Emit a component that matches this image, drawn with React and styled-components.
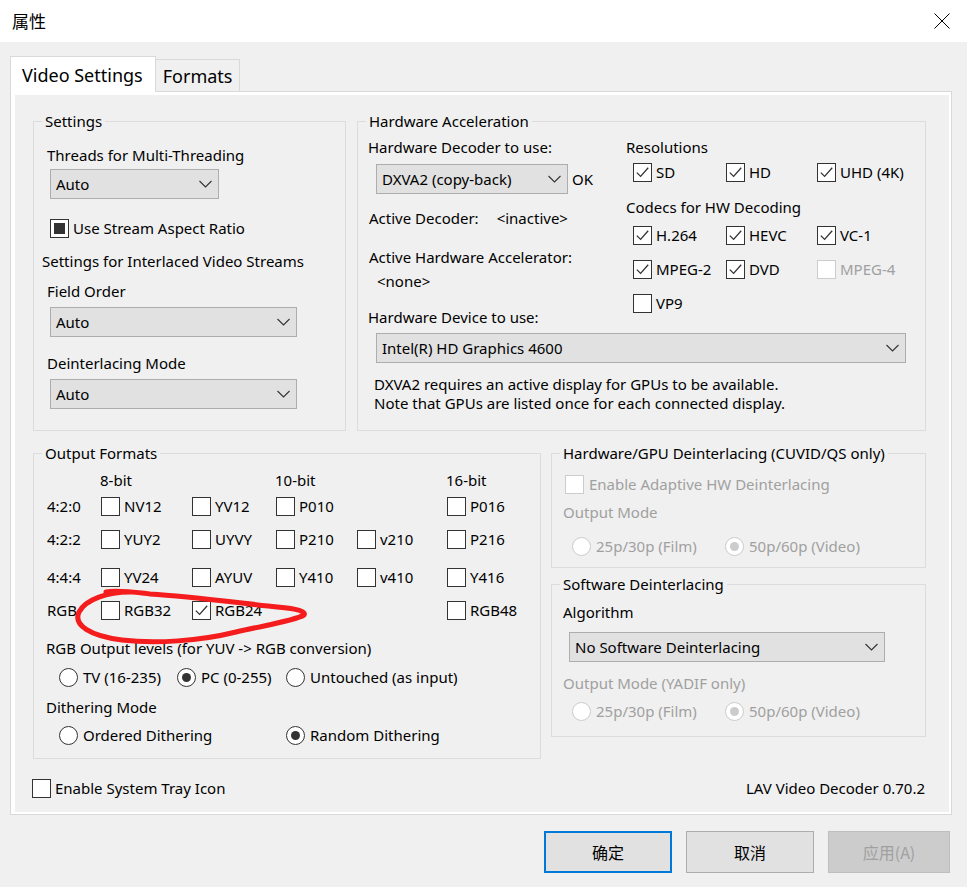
import React from 'react'
import styled, { createGlobalStyle } from 'styled-components';

const GlobalStyle = createGlobalStyle`
  body {
    margin: 0;
    background: #f0f0f0;
  }
  * {
    box-sizing: border-box;
  }
`;

const Window = styled.div`
  position: relative;
  width: 967px;
  height: 887px;
  background: #f0f0f0;
  font-family: "Noto Sans", "Noto Sans CJK SC", sans-serif;
  font-size: 15px;
  line-height: 20px;
  color: #000;
  overflow: hidden;
`;

const TitleBar = styled.div`
  height: 42px;
  background: #fff;
  display: flex;
  align-items: center;
  justify-content: space-between;
  padding: 0 17px 0 12px;
`;

const Title = styled.div`
  font-family: "Noto Sans CJK SC", sans-serif;
  font-size: 17px;
`;

const Body = styled.div`
  padding: 14px 15px 0 10px;
`;

const TabStrip = styled.div`
  display: flex;
  align-items: flex-end;
  height: 36px;
  position: relative;
  z-index: 1;
  margin-bottom: -1px;
`;

const Tab = styled.div`
  height: ${p => (p.active ? '36px' : '32px')};
  margin-bottom: ${p => (p.active ? '0' : '1px')};
  padding: ${p => (p.active ? '0 12px 0 11px' : '0 7px')};
  background: ${p => (p.active ? '#fff' : '#f0f0f0')};
  border: 1px solid #d9d9d9;
  border-bottom: none;
  border-left: ${p => (p.active ? '1px solid #d9d9d9' : 'none')};
  font-size: 18px;
  display: flex;
  align-items: center;
`;

const Panel = styled.div`
  width: 942px;
  height: 724px;
  border: 1px solid #d9d9d9;
  background: #fff;
  padding: 3px 2px 2px 4px;
`;

const Content = styled.div`
  height: 100%;
  background: #f0f0f0;
  padding: 16px 0 0 18px;
`;

const Row = styled.div`
  display: flex;
  gap: ${p => p.gap || 0}px;
  margin-top: ${p => p.mt || 0}px;
`;

const Column = styled.div`
  display: flex;
  flex-direction: column;
  gap: ${p => p.gap || 0}px;
`;

const Group = styled.fieldset`
  margin: 0;
  padding: 0;
  border: 1px solid #dcdcdc;
  width: ${p => p.w}px;
  height: ${p => p.h}px;
  min-width: 0;
`;

const Legend = styled.legend`
  margin-left: 8px;
  padding: 0 3px;
  line-height: 20px;
`;

const GroupBody = styled.div`
  padding-left: ${p => p.pl || 0}px;
  display: flex;
  flex-direction: column;
  align-items: flex-start;
`;

const Label = styled.div`
  margin-top: ${p => p.mt || 0}px;
  margin-left: ${p => p.ml || 0}px;
  color: ${p => (p.disabled ? '#a0a0a0' : '#000')};
  white-space: nowrap;
`;

const Note = styled.div`
  margin-top: ${p => p.mt || 0}px;
  margin-left: ${p => p.ml || 0}px;
  line-height: 19px;
`;

const SelectBox = styled.div`
  margin-top: ${p => p.mt || 0}px;
  margin-left: ${p => p.ml || 0}px;
  width: ${p => p.w}px;
  height: 30px;
  background: #e1e1e1;
  border: 1px solid #adadad;
  display: flex;
  align-items: center;
  justify-content: space-between;
  padding: 0 6px 0 5px;
  white-space: nowrap;
`;

const Inline = styled.div`
  display: flex;
  align-items: center;
  margin-top: ${p => p.mt || 0}px;
  margin-left: ${p => p.ml || 0}px;
`;

const OkText = styled.span`
  margin-left: 4px;
`;

const Gap = styled.span`
  margin-left: ${p => p.w}px;
`;

const Check = styled.label`
  display: flex;
  align-items: center;
  gap: ${p => p.gap ?? 4}px;
  height: 20px;
  color: ${p => (p.disabled ? '#a0a0a0' : '#000')};
  white-space: nowrap;
  margin-top: ${p => p.mt || 0}px;
  margin-left: ${p => p.ml || 0}px;
`;

const Box = styled.span`
  width: 19px;
  height: 19px;
  flex: none;
  background: #fff;
  border: 1px solid ${p => (p.disabled ? '#cccccc' : '#333')};
  display: flex;
  align-items: center;
  justify-content: center;
`;

const Fill = styled.span`
  width: 11px;
  height: 11px;
  background: #333;
`;

const RadioDot = styled.span`
  width: 19px;
  height: 19px;
  flex: none;
  border-radius: 50%;
  background: #fff;
  border: 1px solid ${p => (p.disabled ? '#cccccc' : '#333')};
  display: flex;
  align-items: center;
  justify-content: center;
  &::after {
    content: '';
    display: ${p => (p.checked ? 'block' : 'none')};
    width: 9px;
    height: 9px;
    border-radius: 50%;
    background: ${p => (p.disabled ? '#cccccc' : '#333')};
  }
`;

const CheckGrid = styled.div`
  display: grid;
  grid-template-columns: ${p => p.cols};
  row-gap: ${p => p.rowGap || 0}px;
  margin-top: ${p => p.mt || 0}px;
  margin-left: ${p => p.ml || 0}px;
`;

const FormatGrid = styled.div`
  display: grid;
  grid-template-columns: 54px 91px 84px 81px 90px auto;
  grid-template-rows: 20px 26px 33px 38px 33px;
  align-items: end;
  margin-top: 7px;
`;

const BitHead = styled.div`
  grid-row: 1;
  grid-column: ${p => p.col};
  margin-left: -1px;
`;

const Footer = styled.div`
  display: flex;
  justify-content: space-between;
  align-items: center;
  margin: 19px 0 0 -1px;
  padding-right: 24px;
`;

const ButtonRow = styled.div`
  display: flex;
  justify-content: flex-end;
  gap: 14px;
  margin-top: 16px;
  padding-right: 2px;
`;

const Button = styled.div`
  width: ${p => p.w}px;
  height: 42px;
  display: flex;
  align-items: center;
  justify-content: center;
  font-family: "Noto Sans CJK SC", sans-serif;
  font-size: 16px;
  background: ${p => (p.disabled ? '#cccccc' : '#e1e1e1')};
  color: ${p => (p.disabled ? '#a0a0a0' : '#000')};
  border: ${p => (p.primary ? '2px solid #0078d7' : p.disabled ? '1px solid #bfbfbf' : '1px solid #adadad')};
`;

const Scribble = styled.svg`
  position: absolute;
  left: 0;
  top: 0;
  pointer-events: none;
`;

const Chevron = () => (
  <svg width="13" height="8" viewBox="0 0 13 8">
    <path d="M0.5 1 L6.5 7 L12.5 1" fill="none" stroke="#333" strokeWidth="1.1" />
  </svg>
);

const Select = ({ children, ...rest }) => (
  <SelectBox {...rest}>
    <span>{children}</span>
    <Chevron />
  </SelectBox>
);

const CheckBox = ({ checked, filled, disabled, children, ...rest }) => (
  <Check disabled={disabled} {...rest}>
    <Box disabled={disabled}>
      {checked && (
        <svg width="17" height="17" viewBox="0 0 17 17">
          <path d="M2.8 8.6 L6.6 12.4 L14.2 3.8" fill="none" stroke={disabled ? '#ccc' : '#333'} strokeWidth="1.3" />
        </svg>
      )}
      {filled && <Fill />}
    </Box>
    {children}
  </Check>
);

const Radio = ({ checked, disabled, children, ...rest }) => (
  <Check disabled={disabled} gap={5} {...rest}>
    <RadioDot checked={checked} disabled={disabled} />
    {children}
  </Check>
);

const formatRows = [
  ['4:2:0', ['NV12', 'YV12', 'P010', null, 'P016']],
  ['4:2:2', ['YUY2', 'UYVY', 'P210', 'v210', 'P216']],
  ['4:4:4', ['YV24', 'AYUV', 'Y410', 'v410', 'Y416']],
  ['RGB', ['RGB32', 'RGB24', null, null, 'RGB48']],
];

const App = () => {
  return (
    <Window>
      <GlobalStyle />
      <TitleBar>
        <Title>属性</Title>
        <svg width="16" height="16" viewBox="0 0 16 16">
          <path d="M0.5 0.5 L15.5 15.5 M15.5 0.5 L0.5 15.5" stroke="#000" strokeWidth="1" />
        </svg>
      </TitleBar>
      <Body>
        <TabStrip>
          <Tab active>Video Settings</Tab>
          <Tab>Formats</Tab>
        </TabStrip>
        <Panel>
          <Content>
            <Row gap={11}>
              <Group w={313} h={320}>
                <Legend>Settings</Legend>
                <GroupBody pl={13}>
                  <Label mt={14}>Threads for Multi-Threading</Label>
                  <Select mt={4} ml={3} w={169}>Auto</Select>
                  <CheckBox filled mt={19} ml={3}>Use Stream Aspect Ratio</CheckBox>
                  <Label mt={13} ml={-5}>Settings for Interlaced Video Streams</Label>
                  <Label mt={10}>Field Order</Label>
                  <Select mt={6} ml={3} w={247}>Auto</Select>
                  <Label mt={16}>Deinterlacing Mode</Label>
                  <Select mt={6} ml={3} w={247}>Auto</Select>
                </GroupBody>
              </Group>
              <Group w={569} h={320}>
                <Legend>Hardware Acceleration</Legend>
                <GroupBody pl={10}>
                  <Row>
                    <Column style={{ width: 258 }}>
                      <Label mt={6}>Hardware Decoder to use:</Label>
                      <Inline mt={7} ml={8}>
                        <Select w={192}>DXVA2 (copy-back)</Select>
                        <OkText>OK</OkText>
                      </Inline>
                      <Label mt={14} ml={1}>Active Decoder:<Gap w={18}>&lt;inactive&gt;</Gap></Label>
                      <Label mt={19} ml={1}>Active Hardware Accelerator:</Label>
                      <Label mt={4} ml={9}>&lt;none&gt;</Label>
                      <Label mt={16}>Hardware Device to use:</Label>
                    </Column>
                    <Column>
                      <Label mt={6}>Resolutions</Label>
                      <CheckGrid cols="93px 91px auto" mt={5} ml={7}>
                        <CheckBox checked>SD</CheckBox>
                        <CheckBox checked>HD</CheckBox>
                        <CheckBox checked>UHD (4K)</CheckBox>
                      </CheckGrid>
                      <Label mt={15}>Codecs for HW Decoding</Label>
                      <CheckGrid cols="93px 91px auto" rowGap={14} mt={8} ml={7}>
                        <CheckBox checked>H.264</CheckBox>
                        <CheckBox checked>HEVC</CheckBox>
                        <CheckBox checked>VC-1</CheckBox>
                        <CheckBox checked>MPEG-2</CheckBox>
                        <CheckBox checked>DVD</CheckBox>
                        <CheckBox disabled>MPEG-4</CheckBox>
                        <CheckBox>VP9</CheckBox>
                      </CheckGrid>
                    </Column>
                  </Row>
                  <Select mt={6} ml={8} w={530}>Intel(R) HD Graphics 4600</Select>
                  <Note mt={12} ml={6}>
                    DXVA2 requires an active display for GPUs to be available.<br />
                    Note that GPUs are listed once for each connected display.
                  </Note>
                </GroupBody>
              </Group>
            </Row>
            <Row gap={10} mt={12}>
              <Group w={508} h={316}>
                <Legend>Output Formats</Legend>
                <GroupBody pl={13}>
                  <FormatGrid>
                    <BitHead col={2}>8-bit</BitHead>
                    <BitHead col={4}>10-bit</BitHead>
                    <BitHead col={6}>16-bit</BitHead>
                    {formatRows.map(([name, items], r) => (
                      <React.Fragment key={name}>
                        <Label style={{ gridRow: r + 2, gridColumn: 1 }}>{name}</Label>
                        {items.map((item, c) =>
                          item ? (
                            <CheckBox key={item} checked={item === 'RGB24'} style={{ gridRow: r + 2, gridColumn: c + 2 }}>
                              {item}
                            </CheckBox>
                          ) : null
                        )}
                      </React.Fragment>
                    ))}
                  </FormatGrid>
                  <Label mt={18} ml={-1}>RGB Output levels (for YUV -&gt; RGB conversion)</Label>
                  <CheckGrid cols="118px 109px auto" mt={9} ml={12}>
                    <Radio>TV (16-235)</Radio>
                    <Radio checked>PC (0-255)</Radio>
                    <Radio>Untouched (as input)</Radio>
                  </CheckGrid>
                  <Label mt={10} ml={-1}>Dithering Mode</Label>
                  <CheckGrid cols="227px auto" mt={8} ml={12}>
                    <Radio>Ordered Dithering</Radio>
                    <Radio checked>Random Dithering</Radio>
                  </CheckGrid>
                </GroupBody>
              </Group>
              <Column gap={6}>
                <Group w={375} h={125}>
                  <Legend>Hardware/GPU Deinterlacing (CUVID/QS only)</Legend>
                  <GroupBody pl={11}>
                    <CheckBox disabled gap={5} mt={11} ml={2}>Enable Adaptive HW Deinterlacing</CheckBox>
                    <Label disabled mt={8}>Output Mode</Label>
                    <CheckGrid cols="153px auto" mt={14} ml={9}>
                      <Radio disabled>25p/30p (Film)</Radio>
                      <Radio disabled checked>50p/60p (Video)</Radio>
                    </CheckGrid>
                  </GroupBody>
                </Group>
                <Group w={375} h={163}>
                  <Legend>Software Deinterlacing</Legend>
                  <GroupBody pl={11}>
                    <Label mt={8}>Algorithm</Label>
                    <Select mt={10} ml={6} w={316}>No Software Deinterlacing</Select>
                    <Label disabled mt={11}>Output Mode (YADIF only)</Label>
                    <CheckGrid cols="153px auto" mt={8} ml={9}>
                      <Radio disabled>25p/30p (Film)</Radio>
                      <Radio disabled checked>50p/60p (Video)</Radio>
                    </CheckGrid>
                  </GroupBody>
                </Group>
              </Column>
            </Row>
            <Footer>
              <CheckBox>Enable System Tray Icon</CheckBox>
              <span>LAV Video Decoder 0.70.2</span>
            </Footer>
          </Content>
        </Panel>
        <ButtonRow>
          <Button primary w={128}>确定</Button>
          <Button w={128}>取消</Button>
          <Button disabled w={122}>应用(A)</Button>
        </ButtonRow>
      </Body>
      <Scribble width="967" height="887" viewBox="0 0 967 887">
        <path
          d="M130 592 C108 592, 86 599, 79 612 C73 625, 90 636, 122 640 C155 644, 200 641, 236 632 C266 625, 294 621, 304 615 C307 610, 290 608, 268 606 C232 602, 186 596, 150 594 C132 592, 118 590, 106 592"
          fill="none"
          stroke="#f41c1c"
          strokeWidth="5"
          strokeLinecap="round"
          strokeLinejoin="round"
        />
      </Scribble>
    </Window>
  );
};

export default App;
